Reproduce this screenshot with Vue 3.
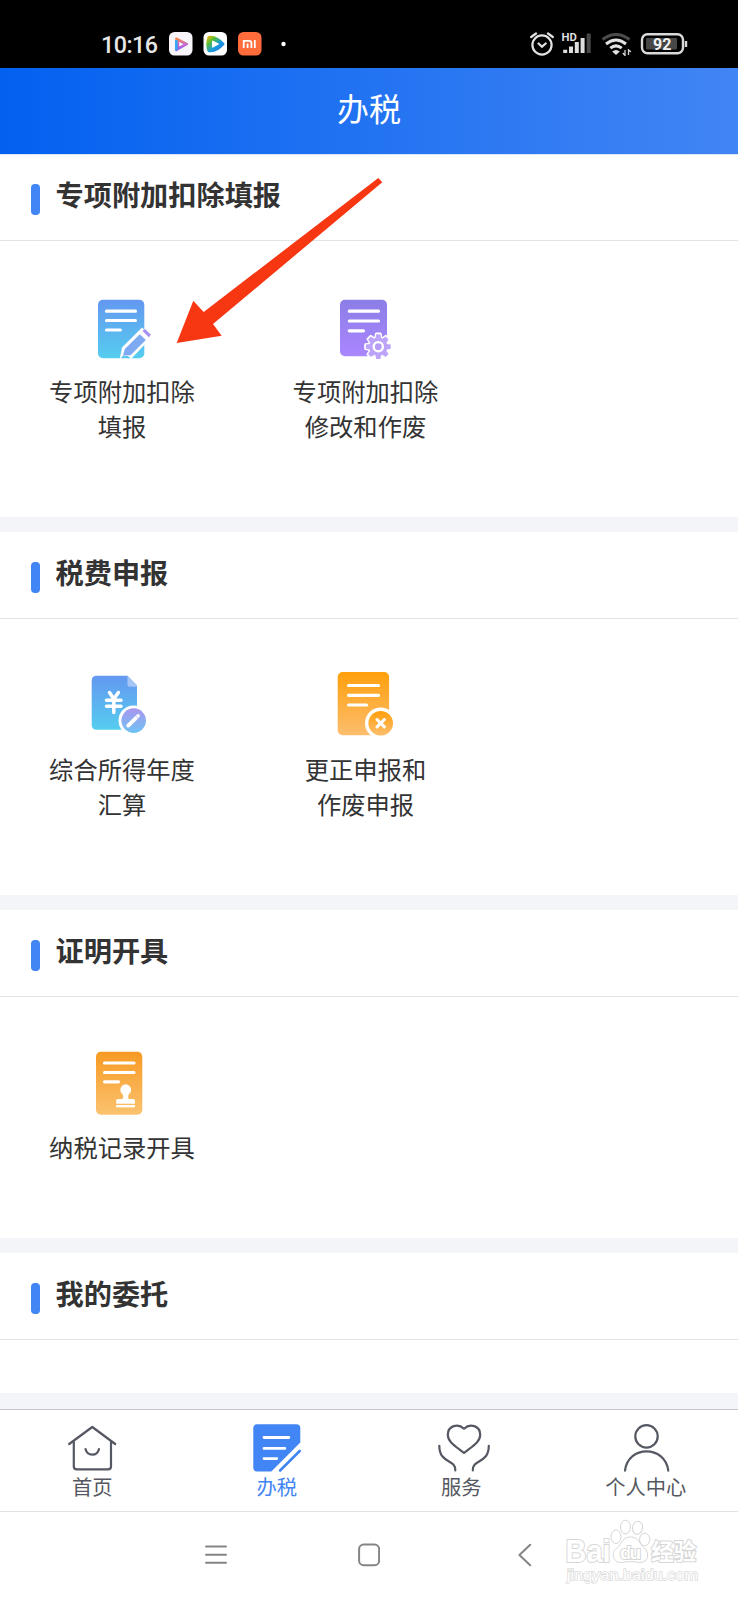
<script setup>
const sections = [
  {
    title: '专项附加扣除填报',
    items: [
      { icon: 'edit', lines: ['专项附加扣除', '填报'] },
      { icon: 'gear', lines: ['专项附加扣除', '修改和作废'] },
    ],
  },
  {
    title: '税费申报',
    items: [
      { icon: 'yuan', lines: ['综合所得年度', '汇算'] },
      { icon: 'cancel', lines: ['更正申报和', '作废申报'] },
    ],
  },
  { title: '证明开具', items: [{ icon: 'stamp', lines: ['纳税记录开具'] }] },
  { title: '我的委托', items: [] },
]
const tabs = [
  { icon: 'home', label: '首页' },
  { icon: 'tax', label: '办税', active: true },
  { icon: 'service', label: '服务' },
  { icon: 'user', label: '个人中心' },
]
const teeth = [0, 45, 90, 135, 180, 225, 270, 315]
</script>

<template>
  <div class="screen">
    <svg class="defs" width="0" height="0">
      <defs>
        <linearGradient id="blue" x1="0" y1="0" x2="0" y2="1"><stop offset="0" stop-color="#6498f0" /><stop offset="1" stop-color="#55cdef" /></linearGradient>
        <linearGradient id="purple" x1="0" y1="0" x2="0" y2="1"><stop offset="0" stop-color="#8b7ee6" /><stop offset="1" stop-color="#ab86ff" /></linearGradient>
        <linearGradient id="orange" x1="0" y1="0" x2="0" y2="1"><stop offset="0" stop-color="#ff9f0c" /><stop offset="1" stop-color="#fdbe6e" /></linearGradient>
        <linearGradient id="amber" x1="0" y1="0" x2="0" y2="1"><stop offset="0" stop-color="#f79a23" /><stop offset="1" stop-color="#fbc26f" /></linearGradient>
        <linearGradient id="badge" x1="0" y1="0" x2="0" y2="1"><stop offset="0" stop-color="#a995ee" /><stop offset="1" stop-color="#6ec3f4" /></linearGradient>
        <linearGradient id="play" x1="0" y1="0" x2="0" y2="1"><stop offset="0" stop-color="#ff8a3c" /><stop offset=".5" stop-color="#c66bd0" /><stop offset="1" stop-color="#8c5cf0" /></linearGradient>
        <linearGradient id="video" x1="0" y1="0" x2="1" y2="1"><stop offset="0" stop-color="#f6b11d" /><stop offset=".25" stop-color="#5cc02e" /><stop offset=".6" stop-color="#1a9be0" /><stop offset="1" stop-color="#2173dc" /></linearGradient>
      </defs>
    </svg>

    <div class="status">
      <span class="time">10:16</span>
      <svg class="apps" width="120" height="24" viewBox="169 32 120 24">
        <rect x="169" y="32" width="23.5" height="23.5" rx="5.5" fill="#f7f5fa" />
        <path d="M176 38 L187.5 44 L176 50.5Z" fill="url(#play)" stroke="url(#play)" stroke-width="1.5" stroke-linejoin="round" />
        <path d="M176.3 40 V50" stroke="#35a7f2" stroke-width="2.6" />
        <path d="M179.3 42 L183.3 44.2 L179.3 46.4Z" fill="#fff" />
        <rect x="203.5" y="32" width="23.5" height="23.5" rx="5.5" fill="#fff" />
        <path d="M208.5 37 Q216 35.5 223.5 44 Q216 52.5 208.5 51 Q206 44 208.5 37Z" fill="url(#video)" stroke="url(#video)" stroke-width="2" stroke-linejoin="round" />
        <path d="M212.5 41 L218.5 44 L212.5 47.3Z" fill="#fff" stroke="#fff" stroke-linejoin="round" />
        <rect x="238" y="32" width="23.5" height="23.5" rx="5.5" fill="#ff6c3c" />
        <path d="M243.7 48 V40.8 H249 Q251.4 40.8 251.4 43 V48 M247.6 43.5 V48 M254.8 40 V48" fill="none" stroke="#fff" stroke-width="1.8" />
        <circle cx="283.5" cy="44" r="2.2" fill="#fff" />
      </svg>
      <svg class="signals" width="160" height="28" viewBox="530 30 160 28">
        <g fill="none" stroke="#e2e2e2" stroke-width="2.2" stroke-linecap="round">
          <circle cx="542" cy="45" r="9.6" />
          <path d="M531.2 37 L536 33.5 M552.8 37 L548 33.5 M538.5 43.5 L542 46.7 L545.7 43.5" />
        </g>
        <text x="561.5" y="40.5" class="hd">HD</text>
        <g stroke-width="4" stroke="#dedede">
          <path d="M565.2 53 V49.8 M571 53 V46.5 M576.8 53 V42 M582.6 53 V38" />
          <path d="M588.7 53 V33.5" stroke="#484848" />
        </g>
        <g fill="none" stroke-width="3">
          <path d="M602.5 39.5 Q616 29.5 629.5 39.5" stroke="#4c4c4c" />
          <path d="M606 44 Q616 36 626 44 M610.3 48.2 Q616 43.5 621.7 48.2" stroke="#e2e2e2" />
        </g>
        <path d="M612.2 51.5 Q616 48.5 619.8 51.5 L616 55Z" fill="#e2e2e2" />
        <path d="M625 50 V56 M628.5 49 V55 M625 55.5 L622.8 53 M628.5 49.5 L630.8 52" stroke="#d2d2d2" stroke-width="1.3" fill="none" />
        <rect x="642" y="34.2" width="41" height="19" rx="5.5" fill="none" stroke="#dadada" stroke-width="2.4" />
        <rect x="646" y="38" width="31" height="11.5" rx="1" fill="#474747" />
        <path d="M686 41 V47" stroke="#dadada" stroke-width="2.4" />
        <text x="662.3" y="49.8" class="battery" text-anchor="middle">92</text>
      </svg>
    </div>

    <header class="header">办税</header>

    <main class="main">
      <section v-for="s in sections" :key="s.title" class="section">
        <div class="section-head"><i class="mark"></i><h2>{{ s.title }}</h2></div>
        <div class="grid" :class="{ empty: !s.items.length }">
          <div v-for="it in s.items" :key="it.icon" class="item">
            <svg class="icon" width="80" height="80" viewBox="0 0 80 80">
              <g v-if="it.icon === 'edit'">
                <rect x="16" y="13.7" width="46.3" height="58.5" rx="5" fill="url(#blue)" />
                <path d="M24.5 25.2 H53.5 M24.5 34.5 H53.5 M24.5 44 H38.3" class="rule" />
                <path d="M37.6 73.5 L40 61.5 L60 41.5 L70 51 L49.5 72.5 Z" fill="#fff" />
                <path d="M41 69.5 L42.8 63 L57.8 48.3 L63.8 54 L48.5 69.2 Z" fill="#7eaaf2" />
                <path d="M38.8 72.2 H48.5 L46 70 L40.8 69.8 Z" fill="#58c6ee" />
                <path d="M60.5 45 L63 43 L69 48.8 L66.8 51.3 Z" fill="#a693ef" />
              </g>
              <g v-else-if="it.icon === 'gear'">
                <rect x="15" y="13.7" width="47" height="56.5" rx="5" fill="url(#purple)" />
                <path d="M24.3 25.2 H53.5 M24.3 35 H53.5 M24.3 44.8 H38.5" class="rule" />
                <g fill="#fff" stroke="#fff" stroke-width="2.5" stroke-linejoin="round">
                  <circle cx="53.3" cy="60.7" r="9.2" />
                  <path v-for="a in teeth" :key="'o' + a" d="M50.5 52 L51.2 47.8 H55.4 L56.1 52Z" :transform="`rotate(${a} 53.3 60.7)`" />
                </g>
                <g fill="#bda4fa">
                  <circle cx="53.3" cy="60.7" r="9.2" />
                  <path v-for="a in teeth" :key="'i' + a" d="M50.5 52.5 L51.2 48.3 H55.4 L56.1 52.5Z" :transform="`rotate(${a} 53.3 60.7)`" />
                </g>
                <circle cx="53.3" cy="60.7" r="4.6" fill="#b49cf7" stroke="#fff" stroke-width="2.4" />
              </g>
              <g v-else-if="it.icon === 'yuan'">
                <path d="M14.7 11.7 H45.5 L55 21.5 V65.7 H14.7 Q9.7 65.7 9.7 60.7 V16.7 Q9.7 11.7 14.7 11.7Z" fill="url(#blue)" />
                <path d="M45.5 11.7 L55 21.5 V22.7 H47.5 Q45.5 22.7 45.5 20.7Z" fill="#a5c5f7" />
                <path d="M27.5 28.5 L31.8 35 L36.4 28.5 M24.5 36.3 H39 M24.5 42.2 H39 M31.8 36 V48.5" fill="none" stroke="#fff" stroke-width="3.5" stroke-linecap="round" />
                <circle cx="51.7" cy="56.6" r="15.2" fill="#fff" />
                <circle cx="51.7" cy="56.6" r="12.3" fill="url(#badge)" />
                <path d="M46.2 61.6 L54.1 53.8" stroke="#fff" stroke-width="3.8" stroke-linecap="round" />
                <path d="M55.5 52.4 L56.1 51.8" stroke="#fff" stroke-width="3.6" stroke-linecap="round" />
                <path d="M53.3 51.5 L56.5 54.7" stroke="#a9a7f0" stroke-width=".6" />
              </g>
              <g v-else-if="it.icon === 'cancel'">
                <rect x="12.7" y="8" width="51.4" height="63.2" rx="5" fill="url(#orange)" />
                <path d="M23.5 21.5 H53.5 M23.5 31.3 H53.5 M23.5 41 H41.5" class="rule" />
                <circle cx="55.7" cy="59.2" r="15.7" fill="#fff" />
                <circle cx="55.7" cy="59.2" r="12.3" fill="url(#orange)" />
                <path d="M52 55.5 L59.4 62.9 M59.4 55.5 L52 62.9" stroke="#fff" stroke-width="3" stroke-linecap="round" />
              </g>
              <g v-else>
                <rect x="14" y="9.7" width="46.3" height="63" rx="5" fill="url(#amber)" />
                <path d="M22.5 21 H52 M22.5 30.5 H52 M22.5 39.8 H36.5" class="rule" />
                <path d="M40.7 57 Q42.2 53.5 39.8 51.5 A5.4 5.4 0 1 1 47.6 51.5 Q45.2 53.5 46.7 57 H51.5 Q53 57 53 58.5 V61.8 H34.2 V58.5 Q34.2 57 35.7 57Z" fill="#fff" />
                <path d="M34.2 64.2 H53" stroke="#fff" stroke-width="2.4" />
              </g>
            </svg>
            <div v-for="l in it.lines" :key="l" class="label">{{ l }}</div>
          </div>
        </div>
      </section>
    </main>

    <nav class="tabs">
      <div v-for="t in tabs" :key="t.icon" class="tab" :class="{ active: t.active }">
        <svg width="60" height="54" viewBox="0 0 60 54" class="tab-icon">
          <path v-if="t.icon === 'home'" d="M7.2 24 L30.3 7 L53.2 24 M11.8 21 V46.5 Q11.8 49.4 14.7 49.4 H46 Q49 49.4 49 46.5 V21 M23.5 29 Q25 34.7 30.3 34.7 T37 29" />
          <g v-else-if="t.icon === 'tax'" transform="translate(-.7 0)">
            <path d="M11 4.3 H50 Q54 4.3 54 8.3 V22.5 L25 51.6 H11 Q7 51.6 7 47.6 V8.3 Q7 4.3 11 4.3Z" fill="#4285f4" stroke="none" />
            <path d="M17.7 17.5 H42.5 M17.7 28.4 H38.5 M17.7 38.6 H30.5" stroke="#fff" stroke-width="2.8" />
            <path d="M53.4 31 L33.8 50.5" stroke="#4285f4" stroke-width="2.6" />
          </g>
          <path v-else-if="t.icon === 'service'" d="M33 8.7 C27 3 16.8 5.5 16.8 15 C16.8 22 24.5 26.2 33 33 C41.5 26.2 49.2 22 49.2 15 C49.2 5.5 39 3 33 8.7Z M8.3 25.8 C8.3 44 24.6 38.5 24.3 50.5 M57.8 25.8 C57.8 44 41.5 38.5 41.8 50.5" />
          <g v-else><circle cx="30.5" cy="16.4" r="11.2" /><path d="M9 50.7 C12 24.8 49 24.8 52.3 50.7" /></g>
        </svg>
        <span>{{ t.label }}</span>
      </div>
    </nav>

    <footer class="system">
      <svg width="22" height="24" viewBox="0 0 22 24"><path d="M1 3.5 H21 M1 11.7 H21 M1 19.8 H21" /></svg>
      <svg width="22" height="24" viewBox="0 0 22 24"><rect x="1.1" y="1.6" width="20" height="20.6" rx="4.5" /></svg>
      <svg width="14" height="24" viewBox="0 0 14 24"><path d="M12.2 1.8 L1.4 12 L12.2 22.2" /></svg>
    </footer>

    <svg class="watermark" width="150" height="76" viewBox="555 1515 150 76">
      <g fill="#fff" stroke="#d6d6d6" stroke-width="1">
        <ellipse cx="616" cy="1536.7" rx="5" ry="6.8" />
        <ellipse cx="625.5" cy="1527" rx="5" ry="6.8" />
        <ellipse cx="637.5" cy="1527.8" rx="5" ry="6.5" transform="rotate(12 637.5 1527.8)" />
        <ellipse cx="644.7" cy="1539.5" rx="5.2" ry="6.2" />
        <path d="M630.5 1537 C622 1537 622 1544 617 1548 C610 1553.5 613.5 1563 621.5 1562.5 C628 1561.3 633 1561.3 639.5 1562.5 C648.5 1563 650 1553.5 644.5 1548 C639 1544 639 1537 630.5 1537Z" />
      </g>
      <g class="wm-text">
        <text x="565.5" y="1561.7" class="wm-latin" textLength="45" lengthAdjust="spacingAndGlyphs">Bai</text>
        <text x="620" y="1558.7" class="wm-du" textLength="21">du</text>
        <text x="651.3" y="1560" class="wm-cjk">经验</text>
      </g>
      <text x="567" y="1579.5" class="wm-url" textLength="131" lengthAdjust="spacingAndGlyphs">jingyan.baidu.com</text>
    </svg>

    <svg class="pointer" width="208" height="168" viewBox="176 177 208 168">
      <path d="M176.7 343 L193.3 300.7 L203.7 312 L378.3 178 L382.3 182.3 L213 324 L221.7 335.7Z" fill="#f73612" />
    </svg>
  </div>
</template>

<style>
body { margin: 0; background: #fff; }
</style>

<style scoped>
.screen {
  position: relative;
  width: 738px;
  height: 1600px;
  overflow: hidden;
  display: flex;
  flex-direction: column;
  background: #fff;
  color: #333;
  font-family: "Noto Sans CJK SC", sans-serif;
}
.defs { position: absolute; }
svg { display: block; flex: none; }
.status {
  box-sizing: border-box;
  height: 68px;
  flex: none;
  background: #000;
  padding: 20px 48px 0 101px;
  display: flex;
  align-items: center;
}
.time { font: 500 23.3px/46px Roboto, sans-serif; color: #e6e6e6; width: 68px; letter-spacing: -.5px; padding-top: 1px; }
.signals { margin-left: auto; }
.hd { font: 700 11.3px Roboto, sans-serif; fill: #dedede; }
.battery { font: 700 16px Roboto, sans-serif; fill: #f2f2f2; }
.header {
  height: 86px;
  flex: none;
  background: linear-gradient(90deg, #0361f0, #4285f4);
  color: #fff;
  font-size: 32px;
  font-weight: 400;
  line-height: 79px;
  text-align: center;
}
.main {
  height: 1255px;
  flex: none;
  display: flex;
  flex-direction: column;
  gap: 15px;
  background: #f4f5f9;
}
.section { background: #fff; }
.section:first-child { box-shadow: inset 0 1px #dbe5f9; }
.section-head {
  height: 87px;
  box-sizing: border-box;
  border-bottom: 1px solid #e3e3e5;
  padding-left: 31px;
  display: flex;
  align-items: flex-start;
  gap: 16px;
}
.mark { width: 8.5px; height: 31px; border-radius: 4px; background: #4285f4; margin-top: 30px; }
h2 { margin: 19px 0 0; font-size: 28.2px; line-height: 42px; font-weight: 700; }
.grid {
  box-sizing: border-box;
  display: grid;
  grid-template-columns: 244px 243px 243px;
  padding: 45px 0 74px;
}
.grid.empty { height: 53px; padding: 0; }
.item { display: flex; flex-direction: column; align-items: center; }
.item:nth-child(2) .icon { margin-right: 1px; }
.icon { margin-bottom: 7px; }
.rule { fill: none; stroke: #fff; stroke-width: 3.2; stroke-linecap: round; }
.label { font-size: 24.3px; line-height: 35px; white-space: nowrap; }
.tabs {
  height: 103px;
  box-sizing: border-box;
  flex: none;
  border-top: 1px solid #c3c4cd;
  border-bottom: 1px solid #e2e2e2;
  display: grid;
  grid-template-columns: repeat(4, 1fr);
}
.tab { display: flex; flex-direction: column; align-items: center; padding-top: 10px; font-size: 20.3px; line-height: 24px; color: #555862; }
.tab-icon { fill: none; stroke: #555862; stroke-width: 2.2; stroke-linecap: round; stroke-linejoin: round; overflow: visible; }
.tab.active { color: #4285f4; }
.system { flex: 1; display: flex; align-items: flex-start; padding: 31px 0 0 205px; fill: none; stroke: #858585; stroke-width: 2; stroke-linecap: round; stroke-linejoin: round; }
.system svg + svg { margin-left: 131px; }
.system svg:last-child { margin-left: 138px; }
.watermark { position: absolute; left: 555px; top: 1515px; }
.wm-text { fill: #fff; stroke: #d6d6d6; paint-order: stroke; stroke-width: 2px; }
.wm-latin { font: 700 32px "Liberation Sans", sans-serif; }
.wm-du { font: 700 19px "Liberation Sans", sans-serif; }
.wm-cjk { font: 700 22.5px "Noto Sans CJK SC", sans-serif; }
.wm-url { font: 400 15px "Liberation Sans", sans-serif; fill: #fff; stroke: #dadada; stroke-width: 1.4px; paint-order: stroke; }
.pointer { position: absolute; left: 176px; top: 177px; }
</style>
